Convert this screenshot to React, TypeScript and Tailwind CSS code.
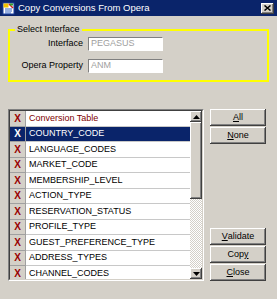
import React from 'react'

const rows = [
  'COUNTRY_CODE',
  'LANGUAGE_CODES',
  'MARKET_CODE',
  'MEMBERSHIP_LEVEL',
  'ACTION_TYPE',
  'RESERVATION_STATUS',
  'PROFILE_TYPE',
  'GUEST_PREFERENCE_TYPE',
  'ADDRESS_TYPES',
  'CHANNEL_CODES',
]

const raised =
  'bg-[#d4d0c8] shadow-[inset_-1px_-1px_#404040,inset_1px_1px_#ffffff,inset_-2px_-2px_#808080]'

function WinButton({ pre, mn, post }: { pre?: string; mn: string; post?: string }) {
  return (
    <button className={`h-[17px] w-full flex items-center justify-center text-[9px] text-black ${raised}`}>
      {pre}
      <span className="underline">{mn}</span>
      {post}
    </button>
  )
}

function Field({ label, value }: { label: string; value: string }) {
  return (
    <div className="flex items-center h-[14px]">
      <span className="w-[74px] text-right pr-[1px] text-[9px] text-black">{label}</span>
      <div className="ml-[4px] w-[75px] h-[14px] bg-[#d4d0c8] border-t border-l border-[#808080] border-b-white border-r-white border-b border-r">
        <div className="h-full bg-white pl-[2px] flex items-center text-[9px] text-[#a0a0a0]">{value}</div>
      </div>
    </div>
  )
}

function Arrow({ up }: { up?: boolean }) {
  return (
    <div className={`h-[11px] flex items-center justify-center ${raised}`}>
      <svg width="7" height="4" viewBox="0 0 7 4">
        {up ? <polygon points="0,4 7,4 3.5,0" fill="#000" /> : <polygon points="0,0 7,0 3.5,4" fill="#000" />}
      </svg>
    </div>
  )
}

export default function App() {
  return (
    <div className="w-[277px] h-[299px] bg-[#d4d0c8] flex flex-col overflow-hidden font-['Liberation_Sans',Arial,sans-serif]">
      {/* Title bar */}
      <div className="h-[16px] bg-[#0a246a] flex items-center pl-[2px] pr-[3px]">
        <svg width="13" height="13" viewBox="0 0 13 13">
          <rect x="1" y="1" width="11" height="11" fill="#ffffff" stroke="#1c3f9c" />
          <rect x="1.5" y="1.5" width="5" height="4" fill="#f2c200" />
          <path d="M3 7 L10 7 M3 9 L10 9 M3 11 L9 11" stroke="#3060c0" strokeWidth="1" />
          <path d="M7 2 L11 6" stroke="#d02020" strokeWidth="1.5" />
          <rect x="8" y="1.5" width="3" height="2" fill="#30a030" />
        </svg>
        <span className="ml-[3px] text-white text-[9.5px] leading-none">Copy Conversions From Opera</span>
        <div className="flex-1" />
        <div className={`w-[13px] h-[11px] flex items-center justify-center ${raised}`}>
          <svg width="7" height="6" viewBox="0 0 7 6">
            <path d="M0.5 0.5 L6.5 5.5 M6.5 0.5 L0.5 5.5" stroke="#000" strokeWidth="1.5" />
          </svg>
        </div>
      </div>

      {/* Select Interface group */}
      <div className="relative mt-[13px] mx-[8px] h-[53px] border-2 border-[#ffff00] pt-[6px] flex flex-col gap-[8px]">
        <span className="absolute left-[5px] top-[-8px] px-[2px] bg-[#d4d0c8] text-[9px] leading-[12px] text-black">
          Select Interface
        </span>
        <Field label="Interface" value="PEGASUS" />
        <Field label="Opera Property" value="ANM" />
      </div>

      {/* List and buttons */}
      <div className="mt-[27px] ml-[8px] flex">
        <div className="w-[196px] h-[172px] border-t border-l border-[#808080] border-b border-r border-b-white border-r-white">
          <div className="h-full flex border-t border-l border-[#404040] border-b border-r border-b-[#d4d0c8] border-r-[#d4d0c8] bg-white">
            <div className="flex-1 overflow-hidden">
              <div className="flex h-[15.5px]">
                <div className="w-[16px] bg-[#d4d0c8] border-r border-b border-[#a0a0a0] flex items-center justify-center text-[10px] font-bold text-[#990000]">
                  X
                </div>
                <div className="flex-1 pl-[3px] flex items-center border-b border-[#c8c8c8] text-[9px] text-[#800000]">
                  Conversion Table
                </div>
              </div>
              {rows.map((r, i) => {
                const sel = i === 0
                return (
                  <div key={r} className="flex h-[15.5px]">
                    <div
                      className={`w-[16px] border-r border-b border-[#a0a0a0] flex items-center justify-center text-[10px] font-bold ${
                        sel ? 'bg-[#0a246a] text-white' : 'bg-[#d4d0c8] text-[#990000]'
                      }`}
                    >
                      X
                    </div>
                    <div
                      className={`flex-1 pl-[3px] flex items-center border-b border-[#c8c8c8] text-[9px] whitespace-nowrap overflow-hidden ${
                        sel ? 'bg-[#0a246a] text-white' : 'text-black'
                      }`}
                    >
                      {r}
                    </div>
                  </div>
                )
              })}
            </div>
            {/* Scrollbar */}
            <div className="w-[12px] flex flex-col">
              <Arrow up />
              <div className={`h-[77px] ${raised}`} />
              <div className="flex-1 bg-[repeating-conic-gradient(#d4d0c8_0_25%,#ffffff_0_50%)] bg-[length:2px_2px]" />
              <Arrow />
            </div>
          </div>
        </div>

        <div className="ml-[6px] w-[56px] h-[172px] flex flex-col gap-[1px]">
          <WinButton mn="A" post="ll" />
          <WinButton mn="N" post="one" />
          <div className="flex-1" />
          <WinButton mn="V" post="alidate" />
          <WinButton pre="Cop" mn="y" />
          <WinButton mn="C" post="lose" />
        </div>
      </div>
    </div>
  )
}
